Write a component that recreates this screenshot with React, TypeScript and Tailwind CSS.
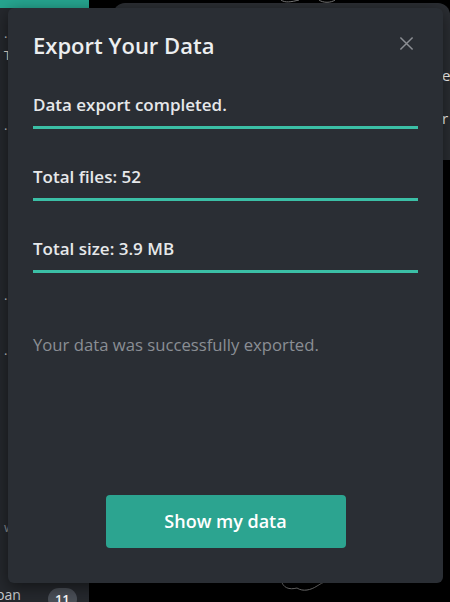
export default function App() {
  const rows = ['Data export completed.', 'Total files: 52', 'Total size: 3.9 MB'];

  return (
    <div className="relative w-[450px] h-[602px] overflow-hidden bg-black flex font-['Open_Sans',sans-serif]">
      {/* Sidebar behind the dialog */}
      <aside className="w-[89px] h-full bg-[#25282d] flex flex-col text-[13px] leading-[20px] text-[#c9ccd0]">
        <div className="h-2 bg-[#26a58f]" />
        <div className="flex-1 flex flex-col pl-1">
          <span className="mt-[15px]">...</span>
          <span className="mt-[2px] text-[#f3e6d6]">To</span>
          <span className="mt-[50px]">...</span>
          <span className="mt-[150px]">...</span>
          <span className="mt-[35px]">...</span>
          <span className="mt-[157px] text-[#8a8e94]">w</span>
        </div>
        <div className="flex items-start h-[12px]">
          <span className="-ml-1 -mt-[5px] text-[14px]">ban</span>
          <span className="ml-[27px] -mt-[2px] rounded-full bg-[#4a4f57] text-white text-[13px] font-semibold px-[7px] leading-[22px]">11</span>
        </div>
      </aside>

      {/* Main area behind the dialog */}
      <main className="flex-1 relative">
        <div className="ml-6 mt-[3px] h-[60px] rounded-t-xl bg-[#2b2e33]" />
        <div className="absolute right-0 top-[50px] w-[20px] h-[110px] bg-[#2b2e33] text-white text-[15px] pl-[12px] pt-[14px] flex flex-col gap-5">
          <span>e</span>
          <span>r</span>
        </div>
        <svg className="absolute left-[190px] top-[578px]" width="70" height="24" viewBox="0 0 70 24" fill="none">
          <path d="M2 2 C 4 10, 10 12, 18 10 C 24 14, 32 12, 38 8 C 44 4, 50 2, 56 0" stroke="#7a7a7a" strokeWidth="1" />
        </svg>
        <svg className="absolute left-[190px] top-0" width="80" height="10" viewBox="0 0 80 10" fill="none">
          <path d="M2 0 C 6 3, 12 2, 20 0 M 40 0 C 44 3, 52 3, 56 0" stroke="#7a7a7a" strokeWidth="1" />
        </svg>
      </main>

      {/* Dialog */}
      <div className="absolute left-2 top-2 w-[435px] h-[575px] rounded-md bg-[#2a2e34] shadow-[0_4px_16px_rgba(0,0,0,0.5)] flex flex-col px-[25px] pt-[22px] pb-[35px]">
        <div className="flex items-start justify-between">
          <h2 className="text-[22px] leading-[30px] font-semibold text-[#eceef0]">Export Your Data</h2>
          <button className="mt-[6px] mr-[4px] text-[#8b8e93]">
            <svg width="15" height="15" viewBox="0 0 16 16" fill="none" stroke="currentColor" strokeWidth="1.6">
              <path d="M1.5 1.5 L14.5 14.5 M14.5 1.5 L1.5 14.5" />
            </svg>
          </button>
        </div>

        <div className="mt-[33px] flex flex-col gap-[36px]">
          {rows.map((r) => (
            <div key={r} className="flex flex-col gap-[9px]">
              <span className="text-[17px] leading-[24px] font-semibold text-[#e6e8ea]">{r}</span>
              <div className="h-[3px] bg-[#3bbfa6]" />
            </div>
          ))}
        </div>

        <p className="mt-[60px] text-[16.7px] leading-[24px] text-[#8a8e94]">Your data was successfully exported.</p>

        <div className="mt-auto flex justify-center">
          <button className="w-[240px] h-[53px] rounded-[4px] bg-[#2ca490] text-white text-[18px] font-semibold">
            Show my data
          </button>
        </div>
      </div>
    </div>
  );
}
